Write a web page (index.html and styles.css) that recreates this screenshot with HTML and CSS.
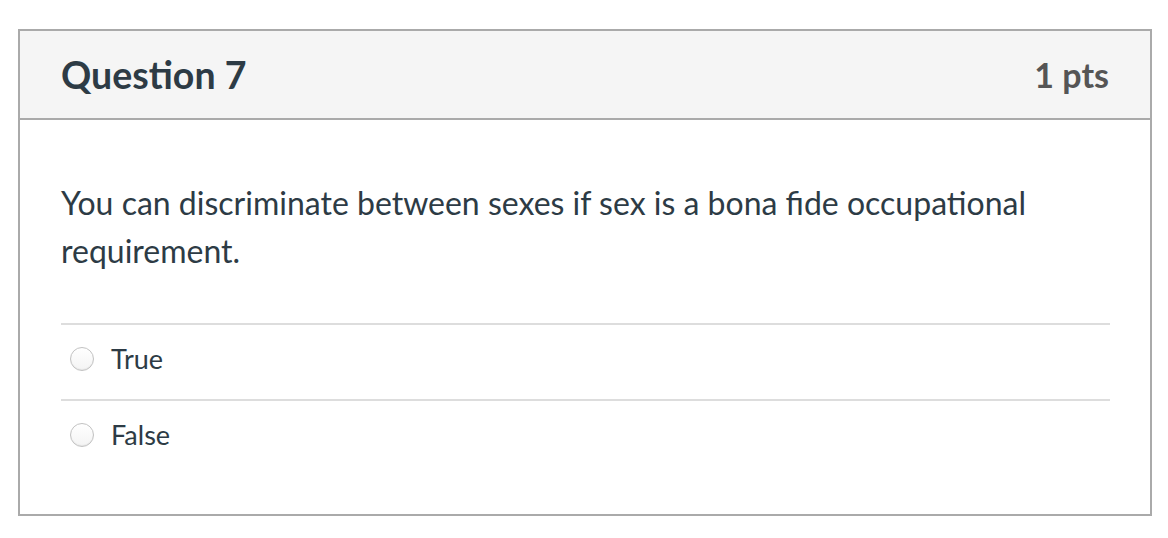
FILE: index.html
```html
<!DOCTYPE html>
<html>
<head>
<meta charset="utf-8">
<link rel="stylesheet" href="styles.css">
</head>
<body>
<div class="card">
  <div class="header">
    <div class="title">Question 7</div>
    <div class="points">1 pts</div>
  </div>
  <div class="content">
    <div class="question-text">You can discriminate between sexes if sex is a bona fide occupational requirement.</div>
    <div class="answers">
      <label class="answer"><span class="radio"></span><span class="label">True</span></label>
      <label class="answer"><span class="radio"></span><span class="label">False</span></label>
    </div>
  </div>
</div>
</body>
</html>
```
FILE: styles.css
```css
html, body {
  margin: 0;
  padding: 0;
  background: #ffffff;
}
body {
  padding: 29px 16px 0 18px;
  font-family: Lato, "Noto Sans", sans-serif;
  color: #2d3b45;
}
.card {
  width: 1134px;
  box-sizing: border-box;
  border: 2px solid #aaaaaa;
  background: #ffffff;
}
.header {
  height: 89px;
  box-sizing: border-box;
  background: #f5f5f5;
  border-bottom: 2px solid #aaaaaa;
  display: flex;
  align-items: center;
  justify-content: space-between;
  padding: 0 41px 0 41px;
}
.title {
  font-size: 37.5px;
  font-weight: 700;
  color: #2d3b45;
}
.points {
  font-size: 34px;
  font-weight: 700;
  color: #555555;
}
.content {
  padding: 59px 40px 39px 41px;
}
.question-text {
  font-size: 32px;
  line-height: 48px;
  max-width: 1000px;
}
.answers {
  margin-top: 48px;
}
.answer {
  display: flex;
  align-items: center;
  border-top: 2px solid #dddddd;
  padding: 13px 0 20px 9px;
  height: 41px;
}
.radio {
  width: 22px;
  height: 22px;
  border: 1px solid #c2c2c2;
  border-radius: 50%;
  background: linear-gradient(#ffffff, #f4f4f4);
  box-shadow: inset 0 -1px 1px rgba(0,0,0,0.06);
  margin-right: 17px;
  flex: none;
}
.label {
  font-size: 27px;
}
```
